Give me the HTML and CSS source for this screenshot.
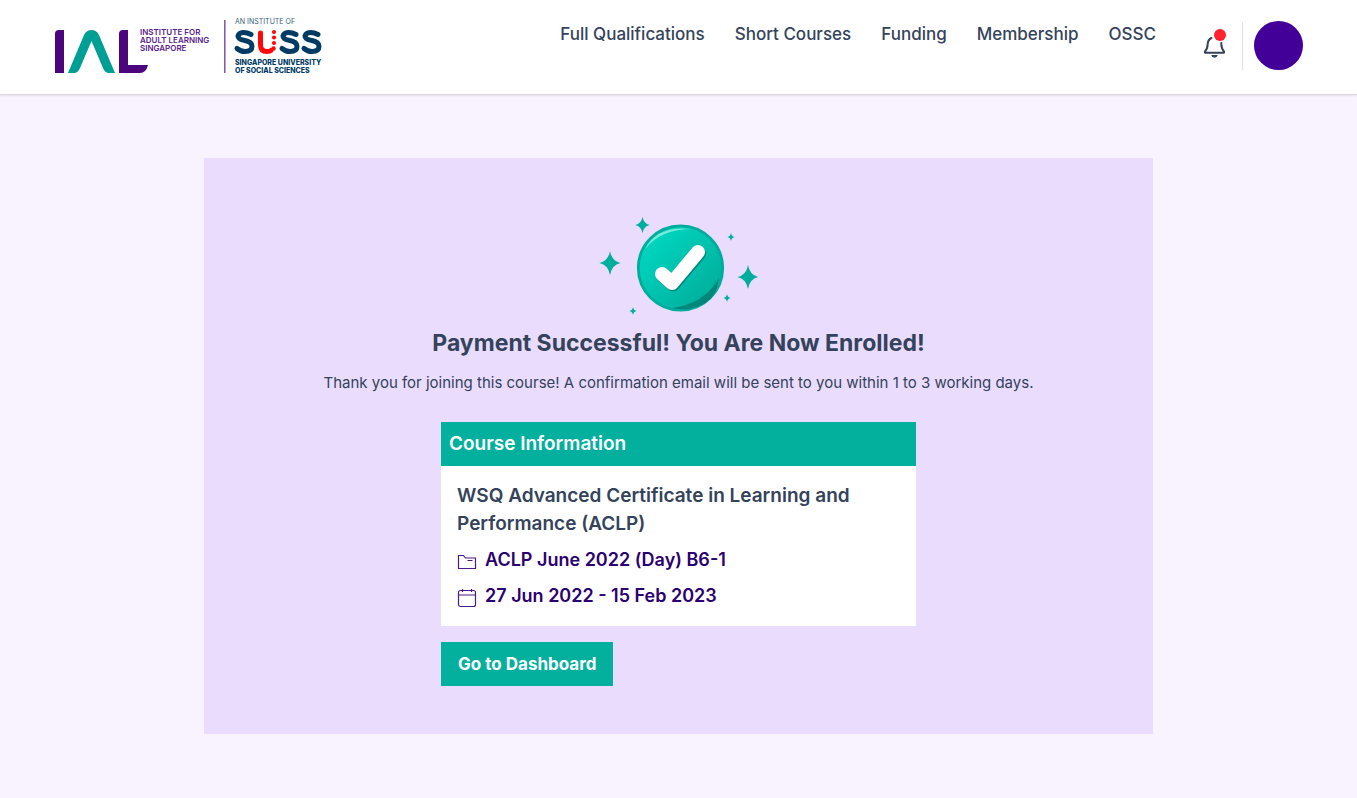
FILE: index.html
```html
<!DOCTYPE html>
<html lang="en">
<head>
<meta charset="utf-8">
<meta name="viewport" content="width=device-width, initial-scale=1">
<title>Payment Successful</title>
<link rel="stylesheet" href="styles.css">
</head>
<body>
<header class="header">
  <a class="logo" href="#" aria-label="Institute for Adult Learning Singapore">
    <svg width="270" height="60" viewBox="0 0 270 60">
      <path fill="#4b057d" d="M0 57V18q0-4 4-4h5v43z"/>
      <path fill="#009f95" d="M13 57 29 19q2.500-5 7.500-5t7.500 5L60 57h-6q-4 0-6-5L36.500 25 25 52q-2 5-6 5z"/>
      <path fill="#4b057d" d="M64 57V18q0-4 4-4h5v35h20q-2 8-8 8z"/>
      <g class="logo-name" fill="#5b2390">
        <text x="85" y="19">INSTITUTE FOR</text>
        <text x="85" y="27">ADULT LEARNING</text>
        <text x="85" y="35">SINGAPORE</text>
      </g>
      <path stroke="#8350ad" stroke-width="1.500" d="M169.800 4v53"/>
      <text class="logo-over" x="180" y="8" fill="#38617e">AN INSTITUTE OF</text>
      <g fill="none" stroke="#003b64" stroke-width="5" stroke-linecap="round">
        <path id="suss-s" d="M196 18.500q-4-2.200-8-2t-5 3.500q0 3 6 4.300 8 1.500 8 6 0 5.200-7 5.200-4.500 0-8-3"/>
        <use href="#suss-s" x="45"/>
        <use href="#suss-s" x="67"/>
      </g>
      <path fill="none" stroke="#ff0808" stroke-width="5" stroke-linecap="round" d="M205.500 17v12q0 6.500 6.500 6.500 3 0 4-1"/>
      <g fill="#ff0808"><circle cx="219" cy="16" r="2.100"/><circle cx="219" cy="21.500" r="2.100"/><circle cx="219" cy="27" r="2.100"/><circle cx="218.500" cy="32.500" r="2.200"/></g>
      <g class="logo-uni" fill="#003b64">
        <text x="180" y="49">SINGAPORE UNIVERSITY</text>
        <text x="180" y="57">OF SOCIAL SCIENCES</text>
      </g>
    </svg>
  </a>
  <nav class="nav">
    <a href="#">Full Qualifications</a>
    <a href="#">Short Courses</a>
    <a href="#">Funding</a>
    <a href="#">Membership</a>
    <a href="#">OSSC</a>
  </nav>
  <div class="account">
    <button class="bell" type="button" aria-label="Notifications">
      <svg width="24" height="36" viewBox="0 0 24 36">
        <path fill="none" stroke="#34435b" stroke-width="2" stroke-linecap="round" stroke-linejoin="round" d="M8.500 10Q5 11.500 4.700 16q-.2 5-2.700 7.500v1.200h19v-1.200q-2.500-2.500-2.700-7.500v-1"/>
        <path fill="#34435b" d="M8.200 27h6.600q-.8 2.800-3.300 2.800T8.200 27z"/>
        <circle cx="17" cy="7" r="6" fill="#ff2330"/>
      </svg>
    </button>
    <button class="avatar" type="button" aria-label="Account"></button>
  </div>
</header>
<main class="page">
  <section class="card">
    <svg class="badge" width="160" height="100" viewBox="-1 0 160 100" aria-hidden="true">
      <defs>
        <linearGradient id="disc" x1="0" y1="0" x2="1" y2="1"><stop offset=".1" stop-color="#00d8c1"/><stop offset=".9" stop-color="#00ad9b"/></linearGradient>
        <path id="star" d="M0-12Q1.800-1.800 10.500 0 1.800 1.800 0 12-1.800 1.800-10.500 0-1.800-1.800 0-12z"/>
      </defs>
      <circle cx="81.500" cy="51" r="42.200" fill="url(#disc)" stroke="#00ad9c" stroke-width="2.800"/>
      <path fill="#75eade" d="M46 32Q58 8 93 12 62 12 46 32z"/>
      <path fill="#00877b" d="M73 91Q105 87 120 61 118 87 90 92 81 93 73 91z"/>
      <path fill="none" stroke="#008b7d" stroke-width="14" stroke-linecap="round" stroke-linejoin="round" d="m64 58.500 10 9 26-31"/>
      <path fill="none" stroke="#fff" stroke-width="14" stroke-linecap="round" stroke-linejoin="round" d="m63 57 10 9 26-31"/>
      <g fill="#00ae9d">
        <use href="#star" transform="translate(11 46)"/>
        <use href="#star" transform="translate(149 60)"/>
        <use href="#star" transform="translate(43.500 8) scale(.68)"/>
        <use href="#star" transform="translate(132 20) scale(.34)"/>
        <use href="#star" transform="translate(128 81) scale(.34)"/>
        <use href="#star" transform="translate(34 94) scale(.34)"/>
      </g>
    </svg>
    <h1 class="title">Payment Successful! You Are Now Enrolled!</h1>
    <p class="message">Thank you for joining this course! A confirmation email will be sent to you within 1 to 3 working days.</p>
    <div class="details">
      <h2 class="details-head">Course Information</h2>
      <div class="details-body">
        <h3 class="course">WSQ Advanced Certificate in Learning and Performance (ACLP)</h3>
        <p class="fact">
          <svg width="20" height="20" viewBox="0 0 20 20" fill="none" stroke="#4b1a86" stroke-width="1.200" aria-hidden="true"><path d="M1.500 16.500v-13h5l2 2.500h10v10.500zM10.500 8.500h5"/></svg>
          <span>ACLP June 2022 (Day) B6-1</span>
        </p>
        <p class="fact">
          <svg width="20" height="20" viewBox="0 0 20 20" fill="none" stroke="#4b1a86" stroke-width="1.200" aria-hidden="true"><rect x="1.500" y="2.500" width="17" height="16" rx="2"/><path d="M1.500 7h17M5.500 1v3M14.500 1v3"/></svg>
          <span>27 Jun 2022 - 15 Feb 2023</span>
        </p>
      </div>
      <button class="dashboard" type="button">Go to Dashboard</button>
    </div>
  </section>
</main>
</body>
</html>
```
FILE: styles.css
```css
* { box-sizing: border-box; }
body {
  margin: 0;
  min-height: 100vh;
  background: #f9f3ff;
  color: #34435b;
  font-family: Inter, "Liberation Sans", sans-serif;
  font-size: 16px;
  line-height: 24px;
}
h1, h2, h3, p { margin: 0; }
button { border: 0; padding: 0; font: inherit; cursor: pointer; }

.header {
  display: flex;
  align-items: flex-start;
  padding: 16px 54px 18px 55px;
  background: #fff;
  border-bottom: 1px solid #dcd8e2;
  box-shadow: 0 1px 2px rgba(0, 0, 0, 0.08);
}
.logo { display: flex; }
.logo-name { font: 600 8px Inter, sans-serif; }
.logo-over { font: 400 7px Inter, sans-serif; }
.logo-uni { font: 800 7px Inter, sans-serif; }
.nav {
  display: flex;
  gap: 30px;
  margin-left: auto;
  padding-top: 6px;
}
.nav a { color: inherit; font-size: 17px; font-weight: 500; text-decoration: none; }
.account {
  display: flex;
  align-items: center;
  margin-left: 47px;
  padding-top: 5px;
}
.bell {
  display: flex;
  align-items: center;
  height: 48px;
  padding-right: 15px;
  border-right: 1px solid #dfe1e5;
  background: none;
}
.avatar {
  width: 49px;
  height: 49px;
  margin-left: 11px;
  border-radius: 50%;
  background: #430098;
}

.page { padding: 63px 0; }
.card {
  display: flex;
  flex-direction: column;
  align-items: center;
  width: 70%;
  margin: 0 auto;
  padding: 59px 0 48px;
  background: #e9dcfd;
}
.badge { display: block; }
.title { margin-top: 10px; font-size: 23px; line-height: 32px; font-weight: 700; text-align: center; }
.message { margin-top: 12px; font-size: 15px; text-align: center; }
.details { width: 50%; margin-top: 27px; }
.details-head {
  padding: 8px;
  background: #02b09d;
  color: #fff;
  font-size: 19px;
  line-height: 28px;
  font-weight: 600;
}
.details-body {
  display: grid;
  gap: 8px;
  padding: 16px;
  background: #fff;
}
.course { font-size: 19px; line-height: 28px; font-weight: 600; }
.fact {
  display: flex;
  align-items: center;
  gap: 8px;
  color: #2b0070;
  font-size: 18px;
  line-height: 28px;
  font-weight: 600;
}
.fact svg { margin-top: 4px; }
.dashboard {
  margin-top: 16px;
  padding: 10px 17px;
  background: #02b09d;
  color: #fff;
  font-size: 17px;
  font-weight: 700;
}
```
